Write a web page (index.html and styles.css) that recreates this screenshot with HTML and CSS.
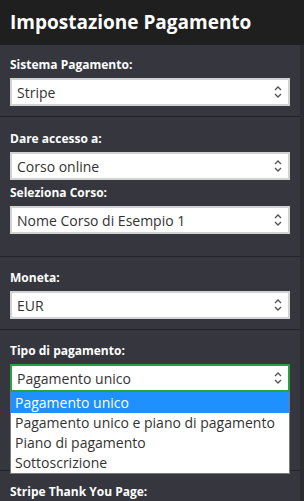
FILE: index.html
```html
<!DOCTYPE html>
<html lang="it">
<head>
  <meta charset="UTF-8" />
  <meta name="viewport" content="width=device-width, initial-scale=1.0" />
  <title>Impostazione Pagamento</title>
  <link rel="stylesheet" href="styles.css">
</head>
<body>
  <div class="header">
    <h1 class="title">Impostazione Pagamento</h1>
  </div>

  <div class="panel">
    <div class="section first">
      <label class="label">Sistema Pagamento:</label>
      <div class="select">
        <span>Stripe</span>
        <svg class="arrows" width="8" height="14" viewBox="0 0 8 14"><path d="M1 5 L4 2 L7 5 M1 9 L4 12 L7 9" fill="none" stroke="#555" stroke-width="1.4"/></svg>
      </div>
    </div>

    <div class="section second">
      <label class="label">Dare accesso a:</label>
      <div class="select">
        <span>Corso online</span>
        <svg class="arrows" width="8" height="14" viewBox="0 0 8 14"><path d="M1 5 L4 2 L7 5 M1 9 L4 12 L7 9" fill="none" stroke="#555" stroke-width="1.4"/></svg>
      </div>
      <label class="label">Seleziona Corso:</label>
      <div class="select">
        <span>Nome Corso di Esempio 1</span>
        <svg class="arrows" width="8" height="14" viewBox="0 0 8 14"><path d="M1 5 L4 2 L7 5 M1 9 L4 12 L7 9" fill="none" stroke="#555" stroke-width="1.4"/></svg>
      </div>
    </div>

    <div class="section">
      <label class="label">Moneta:</label>
      <div class="select">
        <span>EUR</span>
        <svg class="arrows" width="8" height="14" viewBox="0 0 8 14"><path d="M1 5 L4 2 L7 5 M1 9 L4 12 L7 9" fill="none" stroke="#555" stroke-width="1.4"/></svg>
      </div>
    </div>

    <div class="section payment-type">
      <label class="label">Tipo di pagamento:</label>
      <div class="field">
        <div class="select focused">
          <span>Pagamento unico</span>
          <svg class="arrows" width="8" height="14" viewBox="0 0 8 14"><path d="M1 5 L4 2 L7 5 M1 9 L4 12 L7 9" fill="none" stroke="#555" stroke-width="1.4"/></svg>
        </div>
        <ul class="dropdown">
          <li class="active">Pagamento unico</li>
          <li>Pagamento unico e piano di pagamento</li>
          <li>Piano di pagamento</li>
          <li>Sottoscrizione</li>
        </ul>
      </div>
    </div>

    <div class="section">
      <label class="label">Stripe Thank You Page:</label>
    </div>
  </div>
</body>
</html>
```

FILE: styles.css
```css
*{
  margin:0;
  padding:0;
  box-sizing:border-box;
}

body{
  background:#2b2c31;
  font-family:"Open Sans", "DejaVu Sans", sans-serif;
  height:100vh;
  overflow:hidden;
}

.header{
  background:#1f1f1f;
  height:45px;
  padding:0 10px;
}

.title{
  color:#fff;
  font-size:19px;
  font-weight:700;
  line-height:44px;
}

.panel{
  width:300px;
  background:#35363e;
}

.section{
  padding:12px 10px 10px;
  border-bottom:1px solid #222329;
}

.section.first{
  padding-top:11px;
}

.section.second{
  padding-top:13px;
  padding-bottom:22px;
}

.section.payment-type{
  padding-bottom:78px;
}

.label{
  display:block;
  color:#fff;
  font-size:12px;
  font-weight:700;
  line-height:18px;
  margin-bottom:4px;
}

.select + .label{
  margin-top:4px;
}

.select{
  display:flex;
  align-items:center;
  justify-content:space-between;
  height:28px;
  background:#fff;
  border:2px solid #d2d2d2;
  padding:0 6px 0 5px;
  color:#333;
  font-size:14px;
}

.select.focused{
  border-color:#27a046;
}

.arrows{
  display:block;
}

.field{
  position:relative;
}

.dropdown{
  position:absolute;
  top:100%;
  left:0;
  right:0;
  list-style:none;
  background:#fff;
  border:1px solid #7a7a7a;
  border-top:none;
}

.dropdown li{
  height:20px;
  line-height:20px;
  padding-left:4px;
  color:#333;
  font-size:14px;
}

.dropdown li.active{
  background:#1e90ff;
  color:#fff;
  height:21px;
  line-height:21px;
}
```
